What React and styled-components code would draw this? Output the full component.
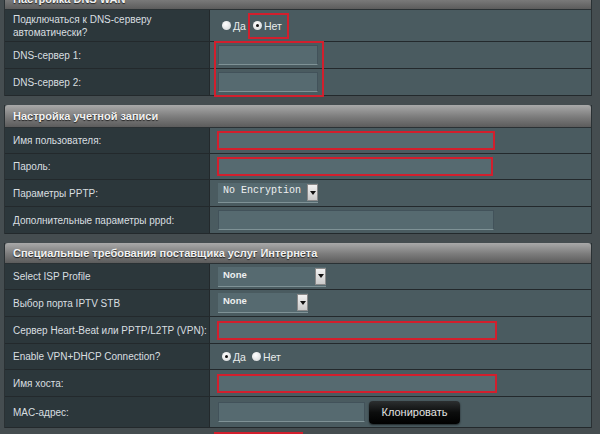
import styled, { createGlobalStyle } from 'styled-components';

const GlobalStyle = createGlobalStyle`
  html, body {
    margin: 0;
    padding: 0;
    background: #454d50;
    overflow: hidden;
  }
  body {
    font-family: "Liberation Sans", Arial, sans-serif;
  }
`

const Page = styled.div`
  width: 600px;
  height: 434px;
  overflow: hidden;
  padding: 0 8px 0 4px;
  box-sizing: border-box;
  display: flex;
  flex-direction: column;
  gap: 9px;
`

const Section = styled.div`
  position: relative;
  width: 588px;
  margin-top: ${(p) => p.$offset || 0}px;
  border-left: 1px solid #2a3134;
  border-right: 1px solid #2a3134;
  box-sizing: border-box;
`

const Header = styled.div`
  height: ${(p) => p.$h || 22}px;
  box-sizing: border-box;
  padding: 0 8px;
  display: flex;
  align-items: center;
  font-size: 11px;
  font-weight: bold;
  color: #f2f2f2;
  text-shadow: 0 1px 1px #222;
  background: linear-gradient(#a9a9a9, #7b7b7b 55%, #5c5c5c);
  border-radius: 3px 3px 0 0;
  border-bottom: 1px solid #2a3134;
  white-space: nowrap;
`

const Row = styled.div`
  display: grid;
  grid-template-columns: 205px 1fr;
  height: ${(p) => p.$h || 26}px;
  border-bottom: 1px solid #23292c;
  box-sizing: border-box;
`

const Label = styled.div`
  background: #2c373b;
  border-right: 1px solid #23292c;
  color: #d9dfe0;
  font-size: 10px;
  line-height: 13px;
  padding: 0 8px;
  display: flex;
  align-items: center;
  white-space: nowrap;
`

const Value = styled.div`
  background: #4a5b60;
  display: flex;
  align-items: center;
  padding-left: 8px;
  gap: 4px;
`

const TextInput = styled.div`
  width: ${(p) => p.$w}px;
  height: ${(p) => (p.$red ? 19 : 20)}px;
  box-sizing: border-box;
  background: #566a70;
  border: 1px solid #42525a;
  border-bottom-color: #7f9296;
  ${(p) =>
    p.$red &&
    `
    border: 2px solid #d21f2d;
    margin-left: -1px;
  `}
`

const Select = styled.div`
  width: ${(p) => p.$w}px;
  height: 20px;
  box-sizing: border-box;
  background: #566a70;
  border-bottom: 1px solid #7f9296;
  display: flex;
  align-items: flex-start;
  justify-content: space-between;
  padding-left: 5px;
  color: #eef0f0;
  font-family: ${(p) => (p.$mono ? '"Liberation Mono", "DejaVu Sans Mono", monospace' : '"Liberation Sans", Arial, sans-serif')};
  font-size: ${(p) => (p.$mono ? 10 : 9.5)}px;
  font-weight: ${(p) => (p.$mono ? 'normal' : 'bold')};
  line-height: 15px;
`

const Arrow = styled.div`
  width: 11px;
  height: 17px;
  margin-top: 1px;
  background: linear-gradient(#f2f2f2, #c9c9c9);
  border: 1px solid #8a8a8a;
  box-sizing: border-box;
  display: flex;
  align-items: center;
  justify-content: center;
  &::after {
    content: '';
    border-left: 3px solid transparent;
    border-right: 3px solid transparent;
    border-top: 4px solid #111;
  }
`

const Radios = styled.div`
  display: flex;
  align-items: center;
  gap: 6px;
  padding-left: 4px;
`

const RadioOption = styled.label`
  display: flex;
  align-items: center;
  gap: 2px;
  color: #e8ecec;
  font-size: 10.5px;
  ${(p) =>
    p.$red &&
    `
    outline: 2px solid #d21f2d;
    outline-offset: 2px;
    padding: 3px 3px 3px 1px;
    margin: -3px 0;
  `}
`

const Dot = styled.span`
  width: 9px;
  height: 9px;
  border-radius: 50%;
  background: radial-gradient(circle at 40% 35%, #ffffff, #cfd3d4);
  display: flex;
  align-items: center;
  justify-content: center;
  &::after {
    content: '';
    width: 3px;
    height: 3px;
    border-radius: 50%;
    background: ${(p) => (p.$checked ? '#111' : 'transparent')};
  }
`

const DnsHighlight = styled.div`
  position: absolute;
  left: 209px;
  top: 53px;
  width: 110px;
  height: 56px;
  border: 2px solid #d21f2d;
  box-sizing: border-box;
  pointer-events: none;
`

const CloneButton = styled.div`
  width: 91px;
  height: 23px;
  border-radius: 4px;
  background: linear-gradient(#2c2f30, #0c0d0d 50%, #000);
  box-shadow: 0 1px 2px rgba(0, 0, 0, 0.6);
  color: #e2e2e2;
  font-size: 11px;
  display: flex;
  align-items: center;
  justify-content: center;
`

const NextHighlight = styled.div`
  margin-left: 210px;
  margin-top: -5px;
  width: 89px;
  height: 20px;
  flex-shrink: 0;
  border: 2px solid #d21f2d;
  box-sizing: border-box;
`

function Radio({ options, checked, redIndex }) {
  return (
    <Radios>
      {options.map((o, i) => (
        <RadioOption key={o} $red={i === redIndex}>
          <Dot $checked={i === checked} />
          {o}
        </RadioOption>
      ))}
    </Radios>
  )
}

export default function App() {
  return (
    <>
      <GlobalStyle />
      <Page>
        <Section $offset={-12}>
          <Header>Настройка DNS WAN</Header>
          <Row $h={32}>
            <Label>
              Подключаться к DNS-серверу
              <br />
              автоматически?
            </Label>
            <Value>
              <Radio options={['Да', 'Нет']} checked={1} redIndex={1} />
            </Value>
          </Row>
          <Row $h={27}>
            <Label>DNS-сервер 1:</Label>
            <Value>
              <TextInput $w={100} />
            </Value>
          </Row>
          <Row $h={27}>
            <Label>DNS-сервер 2:</Label>
            <Value>
              <TextInput $w={100} />
            </Value>
          </Row>
          <DnsHighlight />
        </Section>

        <Section>
          <Header $h={23}>Настройка учетной записи</Header>
          <Row>
            <Label>Имя пользователя:</Label>
            <Value>
              <TextInput $w={278} $red />
            </Value>
          </Row>
          <Row>
            <Label>Пароль:</Label>
            <Value>
              <TextInput $w={276} $red />
            </Value>
          </Row>
          <Row $h={27}>
            <Label>Параметры PPTP:</Label>
            <Value>
              <Select $w={100} $mono>
                No Encryption
                <Arrow />
              </Select>
            </Value>
          </Row>
          <Row $h={27}>
            <Label>Дополнительные параметры pppd:</Label>
            <Value>
              <TextInput $w={276} />
            </Value>
          </Row>
        </Section>

        <Section>
          <Header $h={21}>Специальные требования поставщика услуг Интернета</Header>
          <Row>
            <Label>Select ISP Profile</Label>
            <Value>
              <Select $w={108}>
                None
                <Arrow />
              </Select>
            </Value>
          </Row>
          <Row $h={27}>
            <Label>Выбор порта IPTV STB</Label>
            <Value>
              <Select $w={90}>
                None
                <Arrow />
              </Select>
            </Value>
          </Row>
          <Row $h={27}>
            <Label>Сервер Heart-Beat или PPTP/L2TP (VPN):</Label>
            <Value>
              <TextInput $w={280} $red />
            </Value>
          </Row>
          <Row>
            <Label>Enable VPN+DHCP Connection?</Label>
            <Value>
              <Radio options={['Да', 'Нет']} checked={0} />
            </Value>
          </Row>
          <Row $h={27}>
            <Label>Имя хоста:</Label>
            <Value>
              <TextInput $w={280} $red />
            </Value>
          </Row>
          <Row $h={31}>
            <Label>MAC-адрес:</Label>
            <Value>
              <TextInput $w={147} />
              <CloneButton>Клонировать</CloneButton>
            </Value>
          </Row>
        </Section>
        <NextHighlight />
      </Page>
    </>
  );
}
